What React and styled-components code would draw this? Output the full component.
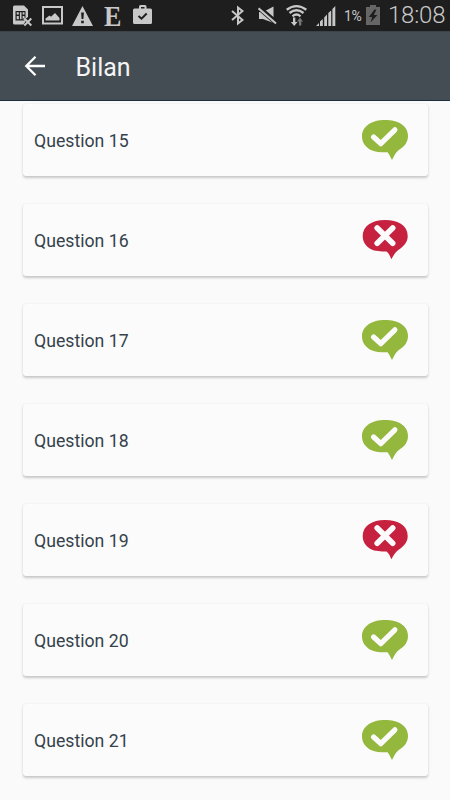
import React from 'react'
import styled, { createGlobalStyle } from 'styled-components'

const GlobalStyle = createGlobalStyle`
  * {
    box-sizing: border-box;
  }
  body {
    margin: 0;
    background: #fafafa;
    font-family: Roboto, "Noto Sans", sans-serif;
  }
`

const Screen = styled.div`
  display: flex;
  flex-direction: column;
  width: 450px;
  height: 800px;
  overflow: hidden;
  background: #fafafa;
`

const StatusBar = styled.div`
  display: flex;
  flex: none;
  justify-content: space-between;
  height: 31px;
  padding: 0 7px 0 12px;
  background: #1e1e1e;
  color: #c8c8c8;
`

const StatusGroup = styled.div`
  display: flex;
  align-items: flex-start;
`

const StatusIcon = styled.svg`
  display: block;
  flex: none;
  width: ${props => props.$width}px;
  height: 31px;
  margin-right: ${props => props.$gap || 0}px;
  fill: #c8c8c8;
`

const Editor = styled.div`
  width: 19px;
  margin-right: 10px;
  font-family: "Liberation Serif", serif;
  font-size: 29px;
  font-weight: 700;
  line-height: 32px;
  transform: scaleX(0.9);
  transform-origin: left;
`

const BatteryLevel = styled.div`
  width: 20px;
  margin-right: 2px;
  font-size: 14px;
  line-height: 32px;
  letter-spacing: -0.3px;
  white-space: nowrap;
`

const Clock = styled.div`
  width: 55px;
  font-size: 24px;
  font-weight: 300;
  line-height: 31px;
  letter-spacing: -0.2px;
  white-space: nowrap;
`

const Toolbar = styled.header`
  display: flex;
  flex: none;
  align-items: center;
  height: 70px;
  padding-left: 24px;
  background: #454d54;
  border-top: 1px solid #3c444a;
  border-bottom: 1px solid #1b303e;
`

const BackArrow = styled.svg`
  width: 22px;
  height: 22px;
  margin-right: 29.5px;
  fill: none;
  stroke: #fff;
  stroke-width: 2.3;
`

const Title = styled.h1`
  margin: 0;
  padding-top: 3px;
  color: #f4f4f4;
  font-size: 25px;
  font-weight: 400;
  line-height: 30px;
`

const QuestionList = styled.main`
  display: flex;
  flex-direction: column;
  gap: 28px;
  padding: 3px 22.5px 0;
`

const Card = styled.div`
  display: flex;
  flex: none;
  align-items: center;
  justify-content: space-between;
  height: 72px;
  padding: 0 19px 0 11.5px;
  background: #fbfbfb;
  border-radius: 3px;
  box-shadow: 0 1.5px 2.5px rgba(0, 0, 0, 0.2), 0 0 1px rgba(0, 0, 0, 0.06);
`

const Label = styled.span`
  padding-top: 1px;
  color: #35424b;
  font-size: 17.7px;
`

const Bubble = styled.svg`
  width: 48px;
  height: 42px;
  margin-top: -1px;
  fill: ${props => (props.$correct ? '#94b83d' : '#c6213f')};
`

const Mark = styled.path`
  fill: none;
  stroke: #fbfbfb;
  stroke-linecap: round;
  stroke-linejoin: round;
  stroke-width: ${props => props.$thickness};
`

const questions = [
  { id: 15, correct: true },
  { id: 16, correct: false },
  { id: 17, correct: true },
  { id: 18, correct: true },
  { id: 19, correct: false },
  { id: 20, correct: true },
  { id: 21, correct: true }
]

const ResultIcon = ({ correct }) => (
  <Bubble $correct={correct} viewBox="0 0 48 42">
    {correct ? (
      <>
        <path d="M24 1C37 1 47 6.500 47 17C47 23 43.500 27.500 38.500 30.500C35.500 32.500 33.500 36 31 40.900C29.500 38.500 28.500 35.500 26.500 33.300C21 33.300 15 33.500 10 31C4.500 28.300 1 23.500 1 17.500C1 7 11 1 24 1Z" />
        <Mark $thickness={5.2} d="M12.600 18L19.800 24.700L33.900 10.800" />
      </>
    ) : (
      <>
        <path d="M24 1C37 1 46.700 6.500 46.700 17C46.700 23 43 27 38 30.500C35 32.600 32.500 36 30.400 40.200C29 37.500 28.300 34.500 25.500 32.500C20 32.300 14 32.500 9.500 30C4.500 27 1.700 22.500 1.700 17C1.700 7 11 1 24 1Z" />
        <Mark $thickness={5.6} d="M16.200 8.900L31.700 24.200M31.700 8.900L16.200 24.200" />
      </>
    )}
  </Bubble>
)

const NotificationIcons = () => (
  <StatusGroup>
    {/* sim card */}
    <StatusIcon $width={21} $gap={9} viewBox="0 0 21 31">
      <path fillRule="evenodd" d="M4 5.500H12L16 9.500V17L14 18.500L12.500 17.500L11 19L13.500 21.500L11.500 24.500H2.500Q1 24.500 1 23V7Q1 5.500 2.500 5.500ZM3.500 11V20.500H13.500V11ZM4.700 12.300H6.800V14.500H4.700ZM7.900 12.300H9.500V19.200H7.900ZM10.600 12.300H12.500V14.500H10.600ZM4.700 16H6.800V19.200H4.700ZM10.600 16H12.500V19.200H10.600Z" />
      <path d="M12.300 18.500L19.300 25.500M19.300 18.500L12.300 25.500" stroke="#c8c8c8" strokeWidth="2" />
    </StatusIcon>
    {/* picture */}
    <StatusIcon $width={21} $gap={9} viewBox="0 0 21 31">
      <path fillRule="evenodd" d="M0 6H21V24.500H0ZM2 8V22.500H19V8Z" />
      <path d="M3.500 20.500V18.500L7.500 15.500L9 16.700L13 13L17.500 18V20.500Z" />
    </StatusIcon>
    {/* warning */}
    <StatusIcon $width={21} $gap={11} viewBox="0 0 21 31">
      <path fillRule="evenodd" d="M10.500 6L21 26H0ZM9.100 12.500L9.600 19H11.400L11.900 12.500ZM9.200 20.700V23.200H11.800V20.700Z" />
    </StatusIcon>
    <Editor>E</Editor>
    {/* briefcase */}
    <StatusIcon $width={20} viewBox="0 0 20 31">
      <path fillRule="evenodd" d="M6 8.500V6.500Q6 5 7.500 5H12Q13.500 5 13.500 6.500V8.500H17.500Q19 8.500 19 10V22.500Q19 24 17.500 24H1.500Q0 24 0 22.500V10Q0 8.500 1.500 8.500ZM8 8.500H11.500V7H8Z" />
      <path d="M5.500 16L8.500 18.700L13.700 13.500" fill="none" stroke="#1e1e1e" strokeWidth="2" />
    </StatusIcon>
  </StatusGroup>
)

const SystemIcons = () => (
  <StatusGroup>
    {/* bluetooth */}
    <StatusIcon $width={14} $gap={14} viewBox="0 0 14 31">
      <path d="M2 11L12.500 20L8 23.500V7.500L12.500 11L2 20" fill="none" stroke="#c8c8c8" strokeWidth="2" />
    </StatusIcon>
    {/* muted */}
    <StatusIcon $width={19} $gap={9} viewBox="0 0 19 31">
      <path d="M1 12H5L15.500 6.500V23L5 19H1Z" />
      <path d="M.5 7.500L18 22.500" stroke="#1e1e1e" strokeWidth="5" />
      <path d="M.5 8.300L18 23.500" stroke="#c8c8c8" strokeWidth="2" />
    </StatusIcon>
    {/* wifi */}
    <StatusIcon $width={21} $gap={9} viewBox="0 0 21 31">
      <path d="M.7 9.700Q10.500 2.500 20.300 9.700M3.500 13Q10.500 7.500 17.500 13M6.500 16.300Q10.500 12.800 14.500 16.300" fill="none" stroke="#c8c8c8" strokeWidth="2.300" />
      <path d="M7 17.500H9.300V22H11.500L8.200 26L4.900 22H7Z" />
      <path d="M13 25.500V21.500H11L14 17.500L17 21.500H15.300V25.500Z" fill="#777" />
    </StatusIcon>
    {/* signal */}
    <StatusIcon $width={20} $gap={8} viewBox="0 0 20 31">
      <path d="M0 26L3 23V26ZM4 21.500L6.800 19V26H4ZM8.200 17.500L11 14.500V26H8.200ZM12.300 13L15.200 10.500V26H12.300ZM16.400 9L19.300 6V26H16.400Z" />
    </StatusIcon>
    <BatteryLevel>1%</BatteryLevel>
    {/* charging battery */}
    <StatusIcon $width={14} $gap={8} viewBox="0 0 14 31">
      <path d="M4 5H10V7H14V25H0V7H4Z" fill="#666" />
      <path d="M8.500 9.500L2.800 17H6.200L4.500 22.500L11.500 15H7.800L10.500 9.500Z" fill="#1e1e1e" />
    </StatusIcon>
    <Clock>18:08</Clock>
  </StatusGroup>
)

const App = () => {
  const questionsList = questions.map( item => {
    return (
      <Card key={item.id}>
        <Label>Question {item.id}</Label>
        <ResultIcon correct={item.correct} />
      </Card>
    )
  })

  return (
    <>
      <GlobalStyle />
      <Screen>
        <StatusBar>
          <NotificationIcons />
          <SystemIcons />
        </StatusBar>
        <Toolbar>
          <BackArrow viewBox="0 0 22 22">
            <path d="M21 11H3M11.500 1.800L2.300 11L11.500 20.200" />
          </BackArrow>
          <Title>Bilan</Title>
        </Toolbar>
        <QuestionList>
          {questionsList}
        </QuestionList>
      </Screen>
    </>
  )
}

export default App
